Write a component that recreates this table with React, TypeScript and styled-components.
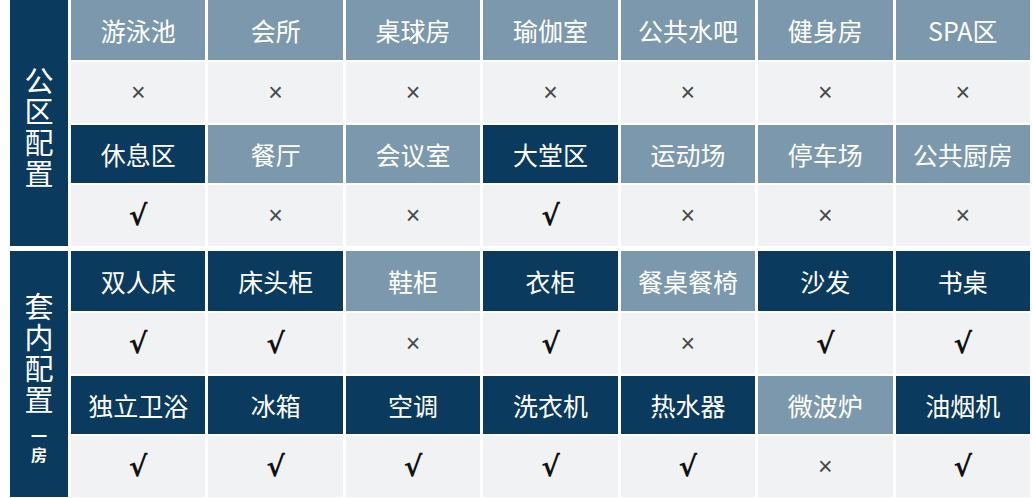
import styled, { createGlobalStyle } from "styled-components";

const GlobalStyle = createGlobalStyle`
  body {
    margin: 0;
    background: #ffffff;
    font-family: "Noto Sans CJK SC", "Noto Sans", sans-serif;
  }
`;

type Item = { name: string; dark: boolean; has: boolean };

interface Section {
  title: string;
  sub?: string;
  rows: Item[][];
}

// D = 深色表头, L = 浅色表头
const mk = (spec: string, marks: string): Item[] =>
  spec.split(",").map((s, i) => {
    const [name, tone] = s.split(":");
    return { name, dark: tone === "D", has: marks[i] === "1" };
  });

const sections: Section[] = [
  {
    title: "公区配置",
    rows: [
      mk("游泳池:L,会所:L,桌球房:L,瑜伽室:L,公共水吧:L,健身房:L,SPA区:L", "0000000"),
      mk("休息区:D,餐厅:L,会议室:L,大堂区:D,运动场:L,停车场:L,公共厨房:L", "1001000"),
    ],
  },
  {
    title: "套内配置",
    sub: "一房",
    rows: [
      mk("双人床:D,床头柜:D,鞋柜:L,衣柜:D,餐桌餐椅:L,沙发:D,书桌:D", "1101011"),
      mk("独立卫浴:D,冰箱:D,空调:D,洗衣机:D,热水器:D,微波炉:L,油烟机:D", "1111101"),
    ],
  },
];

export default function App() {
  return (
    <>
      <GlobalStyle />
      <Page>
        {sections.map((sec) => (
          <Block key={sec.title}>
            <Label>
              <LabelText>{sec.title}</LabelText>
              {sec.sub && <SubText>{sec.sub}</SubText>}
            </Label>
            {sec.rows.map((row, r) => (
              <>
                {row.map((it) => (
                  <HeadCell key={"h" + r + it.name} $dark={it.dark}>
                    {it.name}
                  </HeadCell>
                ))}
                {row.map((it) => (
                  <MarkCell key={"m" + r + it.name}>
                    {it.has ? <Check>√</Check> : <Cross>×</Cross>}
                  </MarkCell>
                ))}
              </>
            ))}
          </Block>
        ))}
      </Page>
    </>
  );
}

const Page = styled.div`
  width: 1032px;
  height: 498px;
  box-sizing: border-box;
  padding: 0 2px 0 10px;
  display: flex;
  flex-direction: column;
  gap: 5px;
  background: #ffffff;
`;

const Block = styled.div`
  display: grid;
  grid-template-columns: 58px repeat(7, 1fr);
  grid-template-rows: 60px 61px 58px 61px;
  column-gap: 3px;
  row-gap: 2px;
`;

const Label = styled.div`
  grid-row: 1 / -1;
  grid-column: 1;
  background: #0b3a5f;
  color: #ffffff;
  display: flex;
  flex-direction: column;
  align-items: center;
  justify-content: center;
  padding-top: 6px;
`;

const LabelText = styled.div`
  width: 1em;
  font-size: 29px;
  line-height: 31px;
  text-align: center;
`;

const SubText = styled.div`
  width: 1em;
  margin-top: 12px;
  font-size: 16px;
  line-height: 19px;
  text-align: center;
  font-weight: 700;
`;

const HeadCell = styled.div<{ $dark: boolean }>`
  background: ${(p) => (p.$dark ? "#0b3a5f" : "#7c98ad")};
  color: #ffffff;
  font-size: 25px;
  display: flex;
  align-items: center;
  justify-content: center;
  white-space: nowrap;
`;

const MarkCell = styled.div`
  background: #f1f2f4;
  display: flex;
  align-items: center;
  justify-content: center;
`;

const Check = styled.span`
  font-family: "DejaVu Sans", sans-serif;
  font-weight: 700;
  font-size: 28px;
  color: #111111;
`;

const Cross = styled.span`
  font-family: "Liberation Sans", sans-serif;
  font-size: 25px;
  color: #4a4a4a;
`;
